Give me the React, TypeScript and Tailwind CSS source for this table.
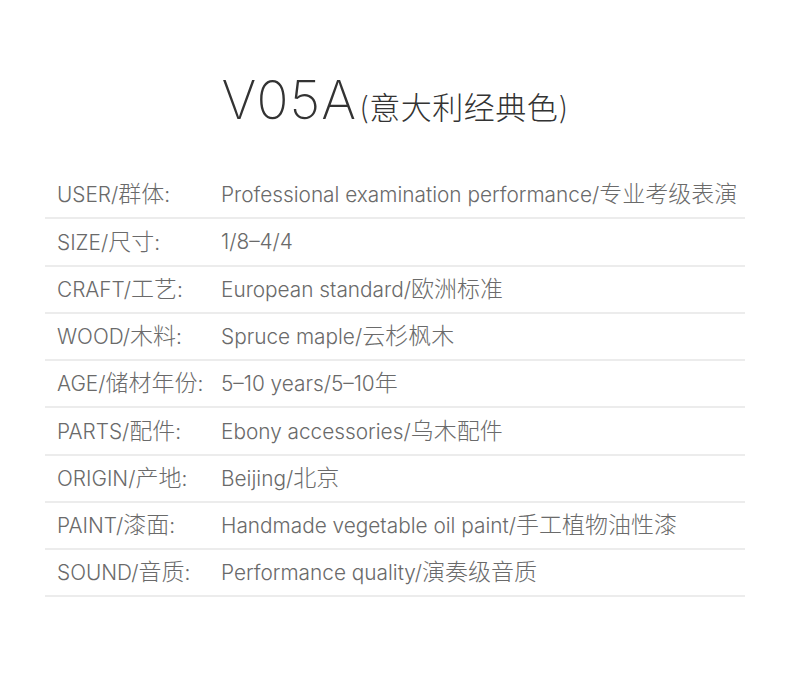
import React from "react";

const rows: [string, string][] = [
  ["USER/群体:", "Professional examination performance/专业考级表演"],
  ["SIZE/尺寸:", "1/8–4/4"],
  ["CRAFT/工艺:", "European standard/欧洲标准"],
  ["WOOD/木料:", "Spruce maple/云杉枫木"],
  ["AGE/储材年份:", "5–10 years/5–10年"],
  ["PARTS/配件:", "Ebony accessories/乌木配件"],
  ["ORIGIN/产地:", "Beijing/北京"],
  ["PAINT/漆面:", "Handmade vegetable oil paint/手工植物油性漆"],
  ["SOUND/音质:", "Performance quality/演奏级音质"],
];

function Mixed({ text }: { text: string }) {
  const parts = text.split(/([\u4e00-\u9fff]+)/).filter(Boolean);
  return (
    <>
      {parts.map((p, i) =>
        /[\u4e00-\u9fff]/.test(p) ? (
          <span key={i} className="text-[23px]">
            {p}
          </span>
        ) : (
          <span key={i}>{p}</span>
        )
      )}
    </>
  );
}

export default function App() {
  return (
    <div
      className="w-[790px] h-[678px] bg-white text-[#6a6a6a]"
      style={{ fontFamily: 'Inter, "Noto Sans CJK SC", sans-serif' }}
    >
      <div className="pt-[74px] flex justify-center items-baseline text-[#333333]">
        <span className="text-[53px] font-extralight leading-none tracking-[1px]">V05A</span>
        <span className="text-[31px] font-extralight leading-none ml-[2px]">
          <span>(</span>
          <span className="font-light tracking-[0.5px]">意大利经典色</span>
          <span>)</span>
        </span>
      </div>
      <div className="mt-[45px] mx-[45px]">
        {rows.map(([k, v]) => (
          <div
            key={k}
            className="h-[47.25px] border-b-2 border-[#ececec] flex items-center pl-[12px] text-[20.8px] font-light"
          >
            <div className="w-[164px] shrink-0 whitespace-nowrap">
              <Mixed text={k} />
            </div>
            <div className="whitespace-nowrap">
              <Mixed text={v} />
            </div>
          </div>
        ))}
      </div>
    </div>
  );
}
